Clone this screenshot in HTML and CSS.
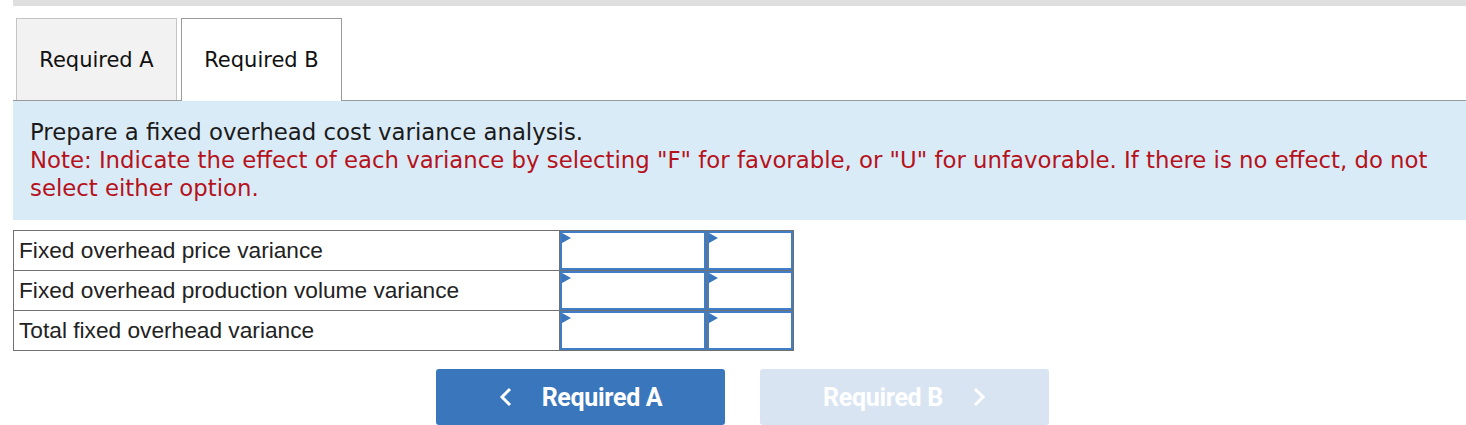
FILE: index.html
```html
<!DOCTYPE html>
<html>
<head>
<meta charset="utf-8">
<link rel="stylesheet" href="styles.css">
</head>
<body>
<div class="page">
  <div class="topbar"></div>
  <div class="tabs">
    <div class="tab tab-inactive">Required A</div>
    <div class="tab tab-active">Required B</div>
  </div>
  <div class="panel">
    <p class="prompt">Prepare a fixed overhead cost variance analysis.</p>
    <p class="note">Note: Indicate the effect of each variance by selecting "F" for favorable, or "U" for unfavorable. If there is no effect, do not select either option.</p>
  </div>
  <table class="grid">
    <tr>
      <td class="label">Fixed overhead price variance</td>
      <td class="amt"><div class="input"><span class="flag"></span></div></td>
      <td class="fu"><div class="input"><span class="flag"></span></div></td>
    </tr>
    <tr>
      <td class="label">Fixed overhead production volume variance</td>
      <td class="amt"><div class="input"><span class="flag"></span></div></td>
      <td class="fu"><div class="input"><span class="flag"></span></div></td>
    </tr>
    <tr>
      <td class="label">Total fixed overhead variance</td>
      <td class="amt"><div class="input"><span class="flag"></span></div></td>
      <td class="fu"><div class="input"><span class="flag"></span></div></td>
    </tr>
  </table>
  <div class="nav">
    <button class="btn btn-prev">
      <svg width="14" height="20" viewBox="0 0 14 20"><path d="M11 2 L3 10 L11 18" fill="none" stroke="#fff" stroke-width="3"/></svg>
      <span>Required A</span>
    </button>
    <button class="btn btn-next">
      <span>Required B</span>
      <svg width="14" height="20" viewBox="0 0 14 20"><path d="M3 2 L11 10 L3 18" fill="none" stroke="#fff" stroke-width="3"/></svg>
    </button>
  </div>
</div>
</body>
</html>
```
FILE: styles.css
```css
html, body {
  margin: 0;
  padding: 0;
  background: #fff;
}
.page {
  padding-left: 13px;
  overflow: hidden;
}
.topbar {
  height: 6px;
  background: #dfdfdf;
}
.tabs {
  margin-top: 12px;
  display: flex;
  align-items: flex-end;
  gap: 4px;
  padding-left: 3px;
  height: 82px;
  border-bottom: 1px solid #9a9a9a;
}
.tab {
  box-sizing: border-box;
  width: 161px;
  display: flex;
  align-items: center;
  justify-content: center;
  font-family: "DejaVu Sans", Verdana, sans-serif;
  font-size: 21px;
  color: #111;
}
.tab-inactive {
  height: 82px;
  background: #f2f2f2;
  border: 1px solid #c4c4c4;
  border-bottom: none;
}
.tab-active {
  height: 83px;
  margin-bottom: -1px;
  background: #fff;
  border: 1px solid #9a9a9a;
  border-bottom: none;
}
.panel {
  background: #daebf8;
  padding: 17px 17px 18px;
  font-family: "DejaVu Sans", Verdana, sans-serif;
  font-size: 22.8px;
  line-height: 28px;
}
.panel p {
  margin: 0;
}
.prompt {
  color: #1a1a1a;
}
.note {
  color: #b5121b;
}
.grid {
  margin-top: 10px;
  border-collapse: collapse;
  font-family: "Liberation Sans", Arial, sans-serif;
  font-size: 22.7px;
  color: #222;
}
.grid td {
  border: 1px solid #707070;
  padding: 0;
  height: 39px;
  box-sizing: border-box;
}
.grid .label {
  width: 546px;
  padding-left: 5px;
}
.grid .amt {
  width: 147px;
}
.grid .fu {
  width: 87px;
}
.input {
  position: relative;
  box-sizing: border-box;
  height: 39px;
  border: 2px solid #3f7ec6;
  background: #fff;
}
.flag {
  position: absolute;
  left: 0;
  top: 0;
  width: 0;
  height: 0;
  border-top: 5px solid transparent;
  border-bottom: 5px solid transparent;
  border-left: 9px solid #3a76bc;
}
.nav {
  margin-top: 18px;
  display: flex;
  justify-content: center;
  gap: 35px;
  padding-left: 6px;
}
.btn {
  width: 289px;
  height: 56px;
  border: none;
  border-radius: 3px;
  display: flex;
  align-items: center;
  justify-content: center;
  gap: 29px;
  font-family: Roboto, "Liberation Sans", Arial, sans-serif;
  font-weight: 700;
  font-size: 25px;
  letter-spacing: -0.3px;
  color: #fff;
  padding: 0;
}
.btn-prev {
  background: #3a76bc;
}
.btn-next {
  background: #d8e4f2;
}
```
